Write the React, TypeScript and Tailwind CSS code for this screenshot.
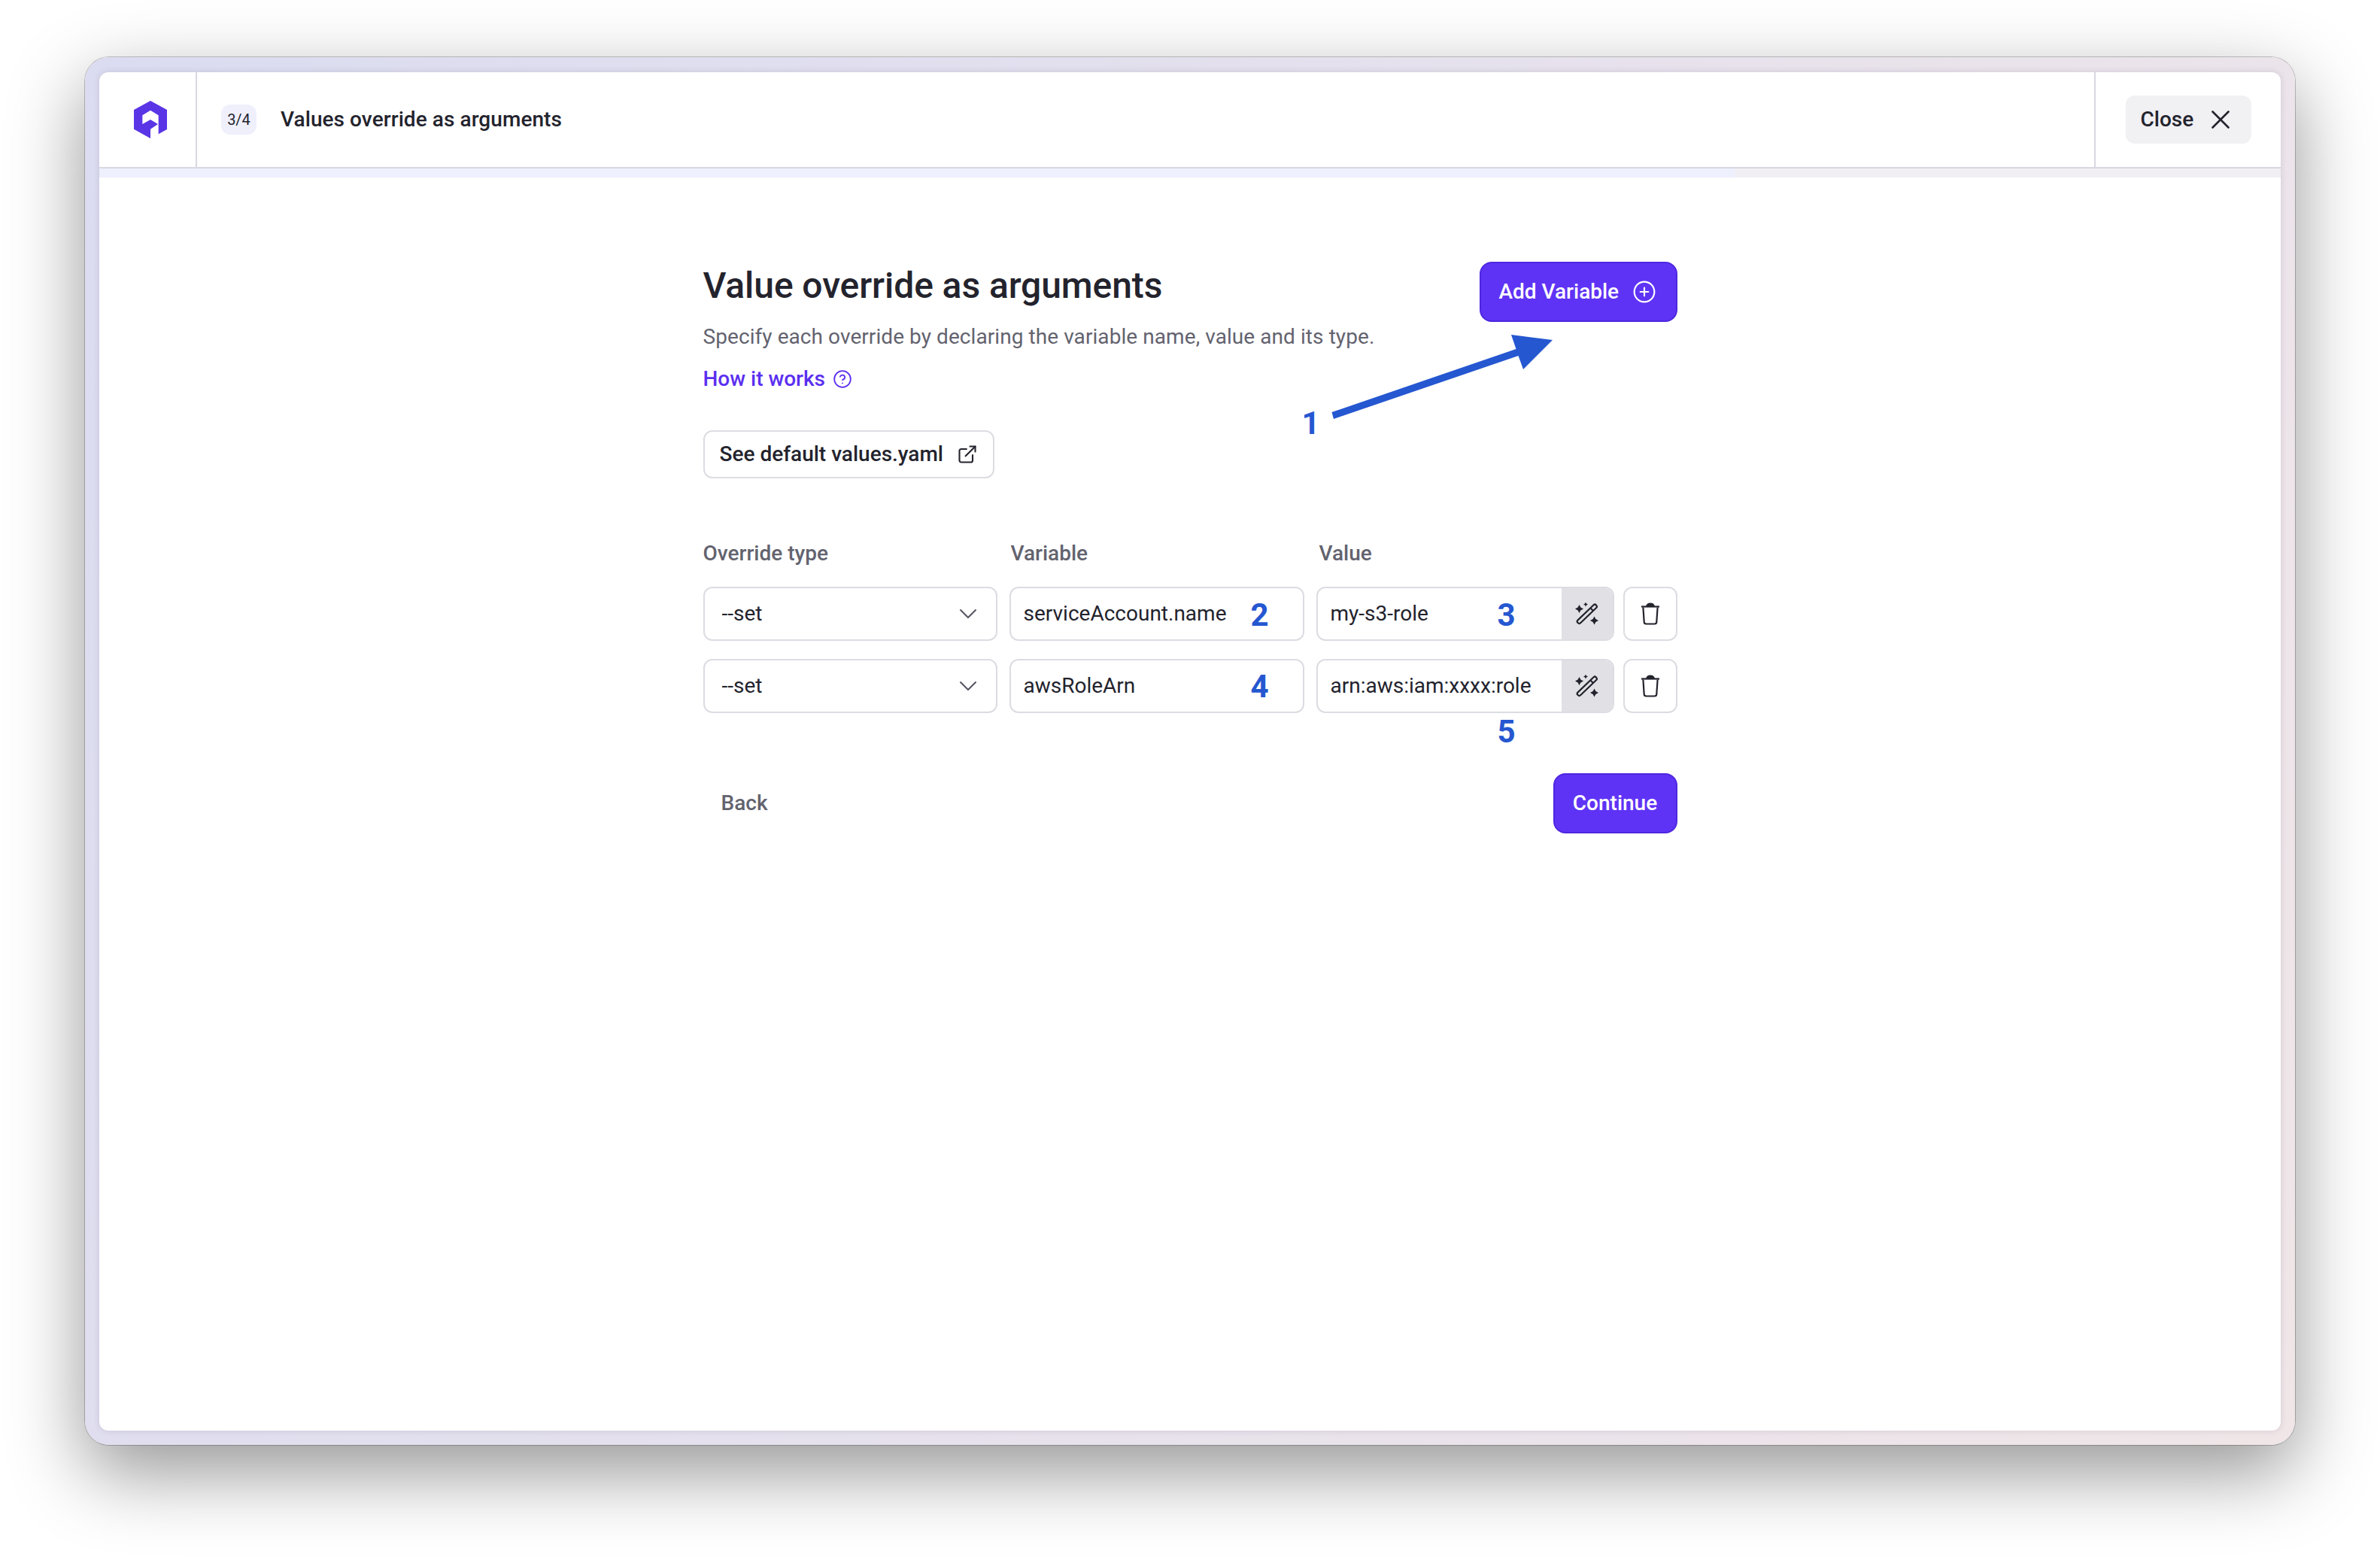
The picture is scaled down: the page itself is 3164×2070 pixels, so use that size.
import { ChevronDown, CircleHelp, CirclePlus, ExternalLink } from "lucide-react";

function Logo() {
  return (
    <svg viewBox="54 72 132 150" width="44" height="50" className="block">
      <polygon
        fill="#5a35e6"
        points="120,72 186,108 186,186 152,205 152,130 120,110 88,130 88,165 120,147 150,165 120,185 120,222 54,185 54,108"
      />
    </svg>
  );
}

function CloseIcon() {
  return (
    <svg viewBox="0 0 24 24" width="24" height="24" fill="none" stroke="#23232d" strokeWidth="2.6" strokeLinecap="round">
      <path d="M1.5 1.5 22.5 22.5M22.5 1.5 1.5 22.5" />
    </svg>
  );
}

function WandIcon() {
  return (
    <svg viewBox="0 0 31 30" width="31" height="30" fill="none" className="block">
      <path
        d="M24.6 3.200 3.400 23.600a2.200 2.200 0 0 0 0 3.100l.6.6a2.200 2.200 0 0 0 3.100 0L28.200 7a2.200 2.200 0 0 0 0-3.100l-.5-.6a2.200 2.200 0 0 0-3.100-.1ZM20.400 7.500l3.900 3.700"
        stroke="#23232d"
        strokeWidth="2.200"
      />
      <path
        fill="#23232d"
        d="M5.500 3 7.400 6.600 11 8.500 7.400 10.400 5.500 14 3.600 10.400 0 8.500 3.600 6.600ZM14 -.5 15 1.500 17 2.500 15 3.500 14 5.500 13 3.500 11 2.500 13 1.500ZM25.500 18.500l1.900 3.600 3.600 1.900-3.600 1.900-1.900 3.600-1.900-3.600L20 24l3.600-1.900Z"
      />
    </svg>
  );
}

function TrashIcon() {
  return (
    <svg viewBox="0 0 26 30" width="26" height="30" fill="none" className="block">
      <path fill="#23232d" d="M7 5.500C7.500 2 9.500.5 13 .5s5.500 1.500 6 5Z" />
      <path d="M1 5.500h24" stroke="#23232d" strokeWidth="2.200" />
      <path d="M3.400 6.500 4.700 26c.1 1.500 1 2.500 2.800 2.500h11c1.800 0 2.700-1 2.800-2.500l1.300-19.500" stroke="#23232d" strokeWidth="2.200" />
    </svg>
  );
}

function SelectBox() {
  return (
    <div className="flex h-[72px] items-center justify-between rounded-[12px] border-2 border-[#dcdce2] bg-white pl-[23px] pr-[27px] text-[#23232d]">
      <span>--set</span>
      <ChevronDown size={40} strokeWidth={1.2} className="mr-[-10px] text-[#55555f]" />
    </div>
  );
}

function ValueRow({ variable, value }: { variable: string; value: string }) {
  return (
    <>
      <SelectBox />
      <div className="flex h-[72px] items-center rounded-[12px] border-2 border-[#dcdce2] bg-white pl-[17px] text-[#23232d]">
        {variable}
      </div>
      <div className="flex gap-3">
        <div className="flex h-[72px] flex-1 items-center overflow-hidden rounded-[12px] border-2 border-[#dcdce2] bg-white text-[#23232d]">
          <span className="flex-1 pl-[17px]">{value}</span>
          <div className="flex h-full w-[68px] items-center justify-center bg-[#e1e0e5]">
            <WandIcon />
          </div>
        </div>
        <div className="flex h-[72px] w-[72px] items-center justify-center rounded-[12px] border-2 border-[#dcdce2] bg-white">
          <TrashIcon />
        </div>
      </div>
    </>
  );
}

export default function App() {
  return (
    <div className="h-[2070px] overflow-hidden bg-white px-[113px] pt-[76px] font-['Roboto',sans-serif] text-[28px] leading-[40px]">
      <div className="h-[1845px] rounded-[32px] bg-[linear-gradient(115deg,#dbdcf1,#f0e6e8)] px-[19px] pb-[19px] pt-[20px] shadow-[0_36px_100px_rgba(0,0,0,0.42),0_0_0_1px_rgba(0,0,0,0.22)]">
        <div className="flex h-full flex-col overflow-hidden rounded-[12px] bg-white shadow-[0_0_8px_rgba(60,50,80,0.15)]">
          {/* Header */}
          <div className="flex h-[128px] items-stretch border-b-2 border-[#d9d7e0]">
            <div className="flex w-[130px] items-center justify-center border-r-2 border-[#d9d7e0] pl-2">
              <Logo />
            </div>
            <div className="flex flex-1 items-center pl-[32px]">
              <span className="flex h-[40px] w-[47px] items-center justify-center rounded-[12px] bg-[#eff0fc] text-[20px] text-[#23232d]">
                3/4
              </span>
              <span className="ml-[32px] font-medium tracking-[0.07px] text-[#23232d]">Values override as arguments</span>
            </div>
            <div className="flex w-[248px] items-center justify-center border-l-2 border-[#d9d7e0]">
              <button className="flex h-[64px] w-[167px] items-center rounded-[12px] bg-[#f1f0f3] pl-[20px] font-medium text-[#23232d]">
                Close
                <span className="ml-[24px]">
                  <CloseIcon />
                </span>
              </button>
            </div>
          </div>

          {/* Progress */}
          <div className="h-[12px] bg-[#f1eff3]">
            <div className="h-full w-3/4 bg-[#eef0fd]" />
          </div>

          {/* Form */}
          <div className="relative mx-auto mt-[112px] w-[1295px]">
            <div className="flex items-start justify-between">
              <div>
                <h1 className="text-[48px] font-medium leading-[64px] tracking-[-0.08px] text-[#23232d]">
                  Value override as arguments
                </h1>
                <p className="mt-[16px] tracking-[0.07px] text-[#63636f]">
                  Specify each override by declaring the variable name, value and its type.
                </p>
                <a className="mt-[16px] flex items-center font-medium text-[#5b2ff0]">
                  How it works
                  <CircleHelp size={26} strokeWidth={1.7} className="ml-[10px]" />
                </a>
              </div>
              <button className="flex h-[80px] w-[263px] items-center rounded-[16px] border-2 border-[#4f27e0] bg-[#5f33f5] pl-[24px] font-medium text-white">
                Add Variable
                <CirclePlus size={32} strokeWidth={1.6} className="ml-[18px]" />
              </button>
            </div>

            <button className="mt-[48px] flex h-[64px] w-[387px] items-center rounded-[12px] border-2 border-[#dcdce2] bg-white pl-[20px] font-medium text-[#23232d]">
              See default values.yaml
              <ExternalLink size={28} strokeWidth={1.8} className="ml-[18px]" />
            </button>

            <div className="mt-[80px] grid grid-cols-[391px_392px_1fr] gap-x-4 gap-y-[24px]">
              <div className="font-medium text-[#63636f]">Override type</div>
              <div className="pl-[2px] font-medium text-[#63636f]">Variable</div>
              <div className="pl-[4px] font-medium text-[#63636f]">Value</div>
              <ValueRow variable="serviceAccount.name" value="my-s3-role" />
              <ValueRow variable="awsRoleArn" value="arn:aws:iam:xxxx:role" />
            </div>

            <div className="mt-[80px] flex items-center justify-between">
              <button className="pl-[24px] font-medium text-[#63636f]">Back</button>
              <button className="flex h-[80px] w-[165px] items-center justify-center rounded-[16px] border-2 border-[#4f27e0] bg-[#5f33f5] font-medium text-white">
                Continue
              </button>
            </div>

            {/* Annotations over the form */}
            <svg viewBox="1760 440 310 120" className="absolute left-[825px] top-[92px] h-[120px] w-[310px]">
              <polygon
                fill="#2557d0"
                points="1770.500,548 2015.500,464 2009,445 2064,452 2025,491 2018.500,473 1773,557"
              />
            </svg>
            <span className="absolute left-[796px] top-[195px] text-[42px] font-bold text-[#2557d0]">1</span>
            <span className="absolute left-[728px] top-[450px] text-[42px] font-bold text-[#2557d0]">2</span>
            <span className="absolute left-[1056px] top-[450px] text-[42px] font-bold text-[#2557d0]">3</span>
            <span className="absolute left-[728px] top-[545px] text-[42px] font-bold text-[#2557d0]">4</span>
            <span className="absolute left-[1056px] top-[605px] text-[42px] font-bold text-[#2557d0]">5</span>
          </div>
        </div>
      </div>
    </div>
  );
}
